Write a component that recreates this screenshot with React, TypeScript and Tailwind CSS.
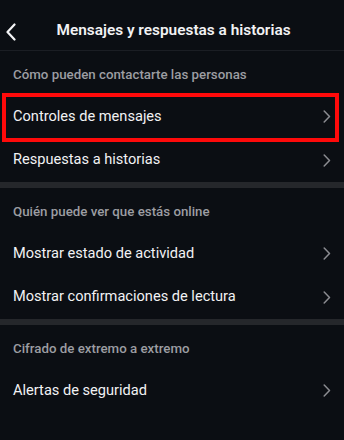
import React from "react";

type Section = {
  title: string;
  items: string[];
};

const sections: Section[] = [
  {
    title: "Cómo pueden contactarte las personas",
    items: ["Controles de mensajes", "Respuestas a historias"],
  },
  {
    title: "Quién puede ver que estás online",
    items: ["Mostrar estado de actividad", "Mostrar confirmaciones de lectura"],
  },
  {
    title: "Cifrado de extremo a extremo",
    items: ["Alertas de seguridad"],
  },
];

const Chevron = () => (
  <svg width="8" height="13" viewBox="0 0 8 13" fill="none" className="shrink-0">
    <path d="M1.2 1L6.5 6.5L1.2 12" stroke="#8b8c91" strokeWidth="1.5" strokeLinecap="round" strokeLinejoin="round" />
  </svg>
);

const Row = ({ label, highlighted }: { label: string; highlighted?: boolean }) => (
  <div className="relative flex h-[43.5px] items-center justify-between pl-[13px] pr-[13px]">
    <span className="text-[14.6px] text-[#f2f2f4]">{label}</span>
    <Chevron />
    {highlighted && (
      // annotation box drawn over the first row
      <div className="pointer-events-none absolute top-[-2px] bottom-[-3px] left-[2px] right-[5px] border-[4px] border-[#ff0a0a]" />
    )}
  </div>
);

export default function App() {
  return (
    <div
      className="h-[440px] w-[344px] overflow-hidden bg-[#0b0e13]"
      style={{ fontFamily: "Roboto, 'Liberation Sans', sans-serif" }}
    >
      {/* Header */}
      <div className="relative flex h-[51px] items-center justify-center border-b border-[#1b1e24] pt-[12px]">
        <svg width="12" height="18" viewBox="0 0 12 18" fill="none" className="absolute left-[5px] top-[23px]">
          <path d="M9.5 1.5L2.5 9L9.5 16.5" stroke="#f4f4f6" strokeWidth="2.2" strokeLinecap="round" strokeLinejoin="round" />
        </svg>
        <h1 className="pl-[3px] text-[15.4px] font-semibold text-[#f2f2f4]">Mensajes y respuestas a historias</h1>
      </div>

      {sections.map((section, i) => (
        <div key={section.title}>
          {i > 0 && <div className="h-[6px] bg-[#25272b]" />}
          <div className="h-[44px] pl-[13px] pt-[16px] text-[13.3px] leading-[16px] font-medium text-[#9c9da2]">
            {section.title}
          </div>
          {section.items.map((item, j) => (
            <Row key={item} label={item} highlighted={i === 0 && j === 0} />
          ))}
        </div>
      ))}
    </div>
  );
}
